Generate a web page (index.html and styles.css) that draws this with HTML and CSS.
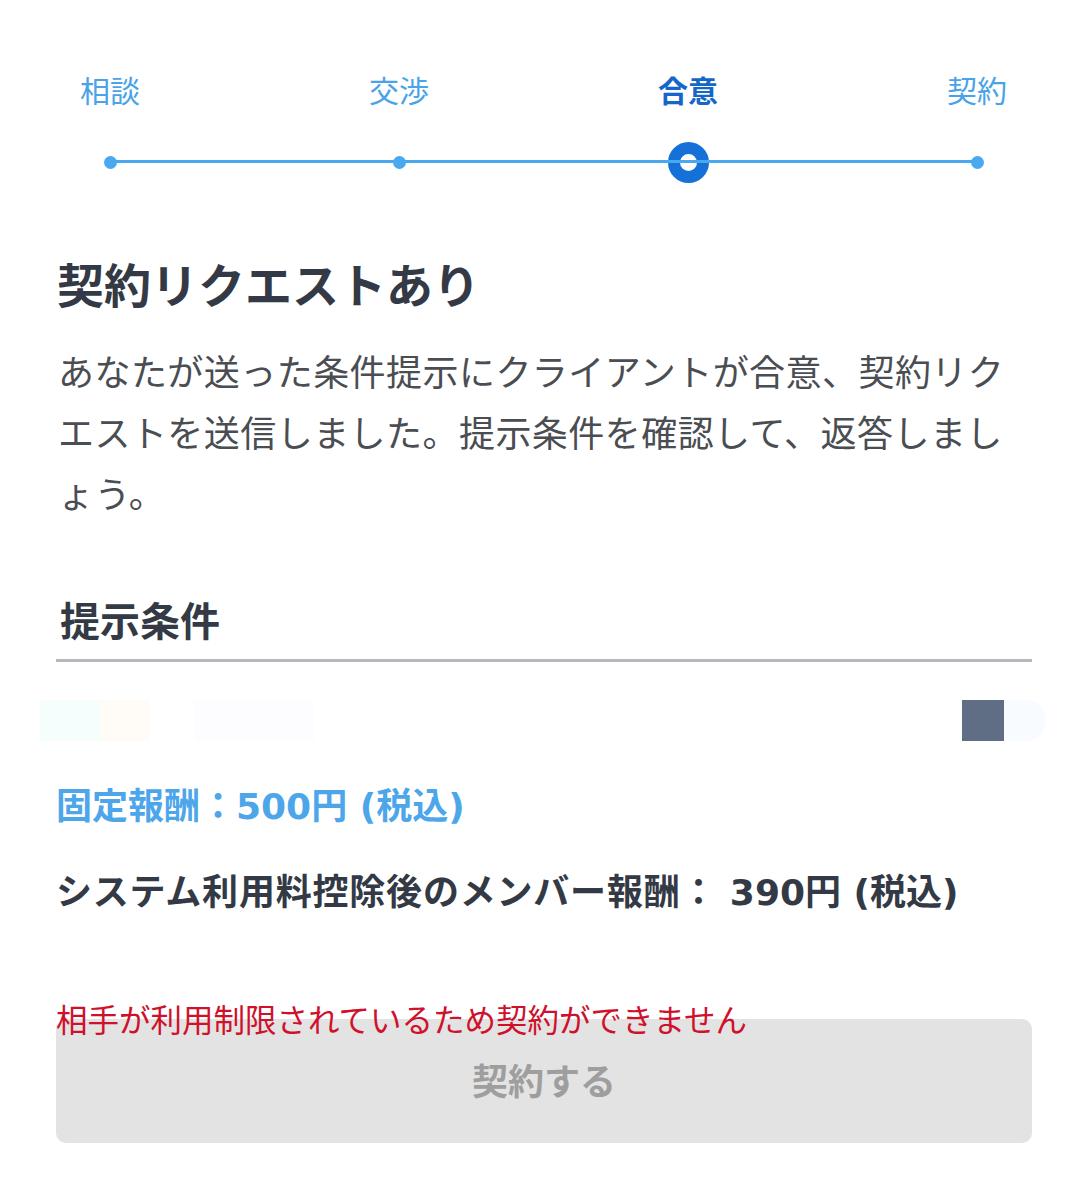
FILE: index.html
```html
<!DOCTYPE html>
<html lang="ja">
<head>
<meta charset="utf-8">
<title>契約リクエストあり</title>
<link rel="stylesheet" href="styles.css">
</head>
<body>
<div class="page">
  <div class="stepper">
    <div class="step">
      <div class="step-label">相談</div>
      <div class="dot-holder"><span class="dot"></span></div>
    </div>
    <div class="step">
      <div class="step-label">交渉</div>
      <div class="dot-holder"><span class="dot"></span></div>
    </div>
    <div class="step active">
      <div class="step-label">合意</div>
      <div class="dot-holder"><span class="dot big"></span></div>
    </div>
    <div class="step">
      <div class="step-label">契約</div>
      <div class="dot-holder"><span class="dot"></span></div>
    </div>
  </div>

  <h1 class="title">契約リクエストあり</h1>
  <p class="desc">あなたが送った条件提示にクライアントが合意、契約リクエストを送信しました。提示条件を確認して、返答しましょう。</p>

  <h2 class="section">提示条件</h2>

  <div class="faint-row">
    <span class="faint f1"></span>
    <span class="faint f2"></span>
    <span class="faint f3"></span>
    <span class="spacer"></span>
    <span class="square"></span>
    <span class="faint f4"></span>
  </div>

  <div class="fee fixed">固定報酬：500円 (税込)</div>
  <div class="fee member"><span class="fee-label">システム利用料控除後のメンバー報酬：</span> 390円 (税込)</div>

  <div class="error">相手が利用制限されているため契約ができません</div>
  <button class="submit" disabled>契約する</button>
</div>
</body>
</html>
```

FILE: styles.css
```css
html, body {
  margin: 0;
  padding: 0;
  background: #ffffff;
}
body {
  font-family: "Noto Sans CJK JP", "Noto Sans", sans-serif;
  color: #333a45;
}
.page {
  width: 976px;
  margin-left: 56px;
  padding-top: 74px;
}

/* stepper */
.stepper {
  position: relative;
  display: flex;
  justify-content: space-between;
  margin: 0 25px 0 24px;
}
.stepper::before {
  content: "";
  position: absolute;
  left: 30px;
  right: 30px;
  top: 86px;
  height: 3px;
  background: #4aa8ef;
}
.step {
  width: 60px;
  display: flex;
  flex-direction: column;
  align-items: center;
}
.step-label {
  font-size: 30px;
  line-height: 30px;
  white-space: nowrap;
  color: #4aa3e8;
}
.step.active .step-label {
  color: #1566c9;
  font-weight: 700;
}
.dot-holder {
  margin-top: 37px;
  height: 42px;
  display: flex;
  align-items: center;
  justify-content: center;
}
.dot {
  width: 13px;
  height: 13px;
  border-radius: 50%;
  background: #4aa8ef;
}
.dot.big {
  width: 17px;
  height: 17px;
  background: #ffffff;
  border: 12.5px solid #1570d8;
}

/* heading & description */
.title {
  margin: 72px 0 0 1px;
  font-size: 47px;
  line-height: 56px;
  font-weight: 700;
  color: #333a45;
}
.desc {
  margin: 29px 0 0 2px;
  font-size: 36px;
  letter-spacing: 0.45px;
  line-height: 61px;
  color: #4a4d52;
  line-break: loose;
}

/* section */
.section {
  margin: 72px 0 0 0;
  padding: 0 0 16px 4px;
  font-size: 40px;
  line-height: 48px;
  font-weight: 700;
  color: #333a45;
  border-bottom: 3px solid #b5b7bc;
}

.faint-row {
  display: flex;
  height: 41px;
  margin: 38px -14px 0 -16px;
}
.faint { display: block; height: 41px; }
.f1 { width: 60px; background: #f6fdfd; }
.f2 { width: 50px; background: #fffcf7; }
.f3 { width: 120px; margin-left: 44px; background: #fdfdff; }
.spacer { flex: 1; }
.square { display: block; width: 42px; height: 41px; background: #5f6e85; }
.f4 { width: 42px; background: #f8fbff; border-radius: 0 20px 20px 0; }

/* fees */
.fee {
  font-family: "DejaVu Sans", "Noto Sans CJK JP", sans-serif;
  font-size: 36px;
  line-height: 44px;
  font-weight: 700;
  white-space: nowrap;
}
.fixed {
  margin-top: 44px;
  color: #4da6ea;
}
.member {
  margin-top: 42px;
  color: #333a45;
}
.fee-label {
  letter-spacing: 0.8px;
}

/* error + button */
.error {
  position: relative;
  z-index: 1;
  margin-top: 88px;
  font-size: 31.5px;
  line-height: 30px;
  color: #d0112b;
  white-space: nowrap;
}
.submit {
  display: block;
  width: 976px;
  height: 124px;
  margin-top: -14px;
  border: none;
  border-radius: 10px;
  background: #e3e3e3;
  color: #9e9e9e;
  font-family: "Noto Sans CJK JP", sans-serif;
  font-size: 36px;
  font-weight: 700;
  padding: 0 0 4px 0;
}
```
